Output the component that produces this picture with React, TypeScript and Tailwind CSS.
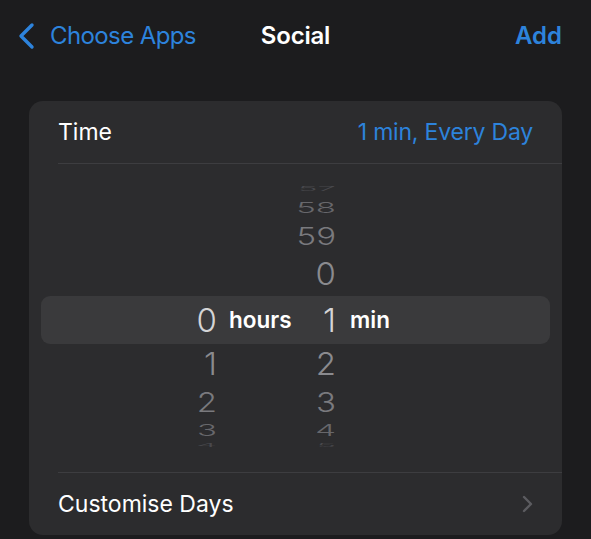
import React from 'react';

type Row = {
  h: string;
  hour?: string;
  min?: string;
  scale: string;
  color: string;
};

// wheel rows, top to bottom; the selected row sits between `above` and `below`
const above: Row[] = [
  { h: 'h-[12px]', min: '57', scale: 'scale-y-[0.2]', color: 'text-[#48484c]' },
  { h: 'h-[26px]', min: '58', scale: 'scale-y-[0.45]', color: 'text-[#67676b]' },
  { h: 'h-[32px]', min: '59', scale: 'scale-y-[0.72]', color: 'text-[#7a7a7e]' },
  { h: 'h-[44px]', min: '0', scale: 'scale-y-[0.95]', color: 'text-[#8a8a8e]' },
];

const below: Row[] = [
  { h: 'h-[40px]', hour: '1', min: '2', scale: 'scale-y-[0.95]', color: 'text-[#8a8a8e]' },
  { h: 'h-[36px]', hour: '2', min: '3', scale: 'scale-y-[0.8]', color: 'text-[#7a7a7e]' },
  { h: 'h-[20px]', hour: '3', min: '4', scale: 'scale-y-[0.5]', color: 'text-[#67676b]' },
  { h: 'h-[10px]', hour: '4', min: '5', scale: 'scale-y-[0.15]', color: 'text-[#48484c]' },
];

function WheelRow({ row }: { row: Row }) {
  return (
    <div className={`mx-3 flex items-center ${row.h} ${row.color}`}>
      <div className={`w-[176px] text-right text-[33px] font-light leading-none ${row.scale}`}>{row.hour}</div>
      <div className="ml-3 w-[64px]" />
      <div className={`w-[43px] text-right text-[33px] font-light leading-none ${row.scale}`}>{row.min}</div>
    </div>
  );
}

export default function App() {
  return (
    <div
      className="w-[591px] h-[539px] overflow-hidden bg-[#1c1c1e] text-white"
      style={{ fontFamily: 'Inter, "Noto Sans", sans-serif' }}
    >
      {/* nav bar */}
      <div className="relative flex items-center h-[72px] pl-[16px] pr-[29px]">
        <div className="flex items-center text-[#2d83dc]">
          <svg width="22" height="28" viewBox="0 0 22 28" fill="none">
            <path d="M16 3 L5 14 L16 25" stroke="currentColor" strokeWidth={3.4} strokeLinecap="round" strokeLinejoin="round" />
          </svg>
          <span className="ml-[12px] text-[24px] tracking-[-0.6px]">Choose Apps</span>
        </div>
        <div className="absolute left-0 right-0 text-center text-[24px] font-semibold tracking-[-0.2px] pointer-events-none">Social</div>
        <div className="ml-auto text-[24px] font-semibold text-[#2d83dc]">Add</div>
      </div>

      <div className="px-[29px] pt-[29px]">
        <div className="rounded-[14px] bg-[#2c2c2e] overflow-hidden">
          {/* time row */}
          <div className="flex items-center h-[62px] px-[29px]">
            <span className="text-[23px]">Time</span>
            <span className="ml-auto text-[23px] tracking-[-0.2px] text-[#2d83dc]">1 min, Every Day</span>
          </div>
          <div className="ml-[29px] h-px bg-[#3d3d40]" />

          {/* picker */}
          <div className="h-[308px] pt-[18px]">
            {above.map((r, i) => (
              <WheelRow key={'a' + i} row={r} />
            ))}
            <div className="mx-3 flex items-center h-[48px] rounded-[9px] bg-[#3a3a3c]">
              <div className="w-[176px] text-right text-[33px] font-light leading-none text-[#d4d4d6]">0</div>
              <div className="ml-3 w-[64px] text-[22.5px] font-semibold">hours</div>
              <div className="w-[43px] text-right text-[33px] font-light leading-none text-[#d4d4d6]">1</div>
              <div className="ml-[14px] text-[22.5px] font-semibold">min</div>
            </div>
            {below.map((r, i) => (
              <WheelRow key={'b' + i} row={r} />
            ))}
          </div>
          <div className="ml-[29px] h-px bg-[#3d3d40]" />

          {/* customise days */}
          <div className="flex items-center h-[62px] px-[29px]">
            <span className="text-[23px]">Customise Days</span>
            <svg className="ml-auto text-[#5c5c60]" width="12" height="18" viewBox="0 0 12 18" fill="none">
              <path d="M3 2 L10 9 L3 16" stroke="currentColor" strokeWidth={2.4} strokeLinecap="round" strokeLinejoin="round" />
            </svg>
          </div>
        </div>
      </div>
    </div>
  );
}
